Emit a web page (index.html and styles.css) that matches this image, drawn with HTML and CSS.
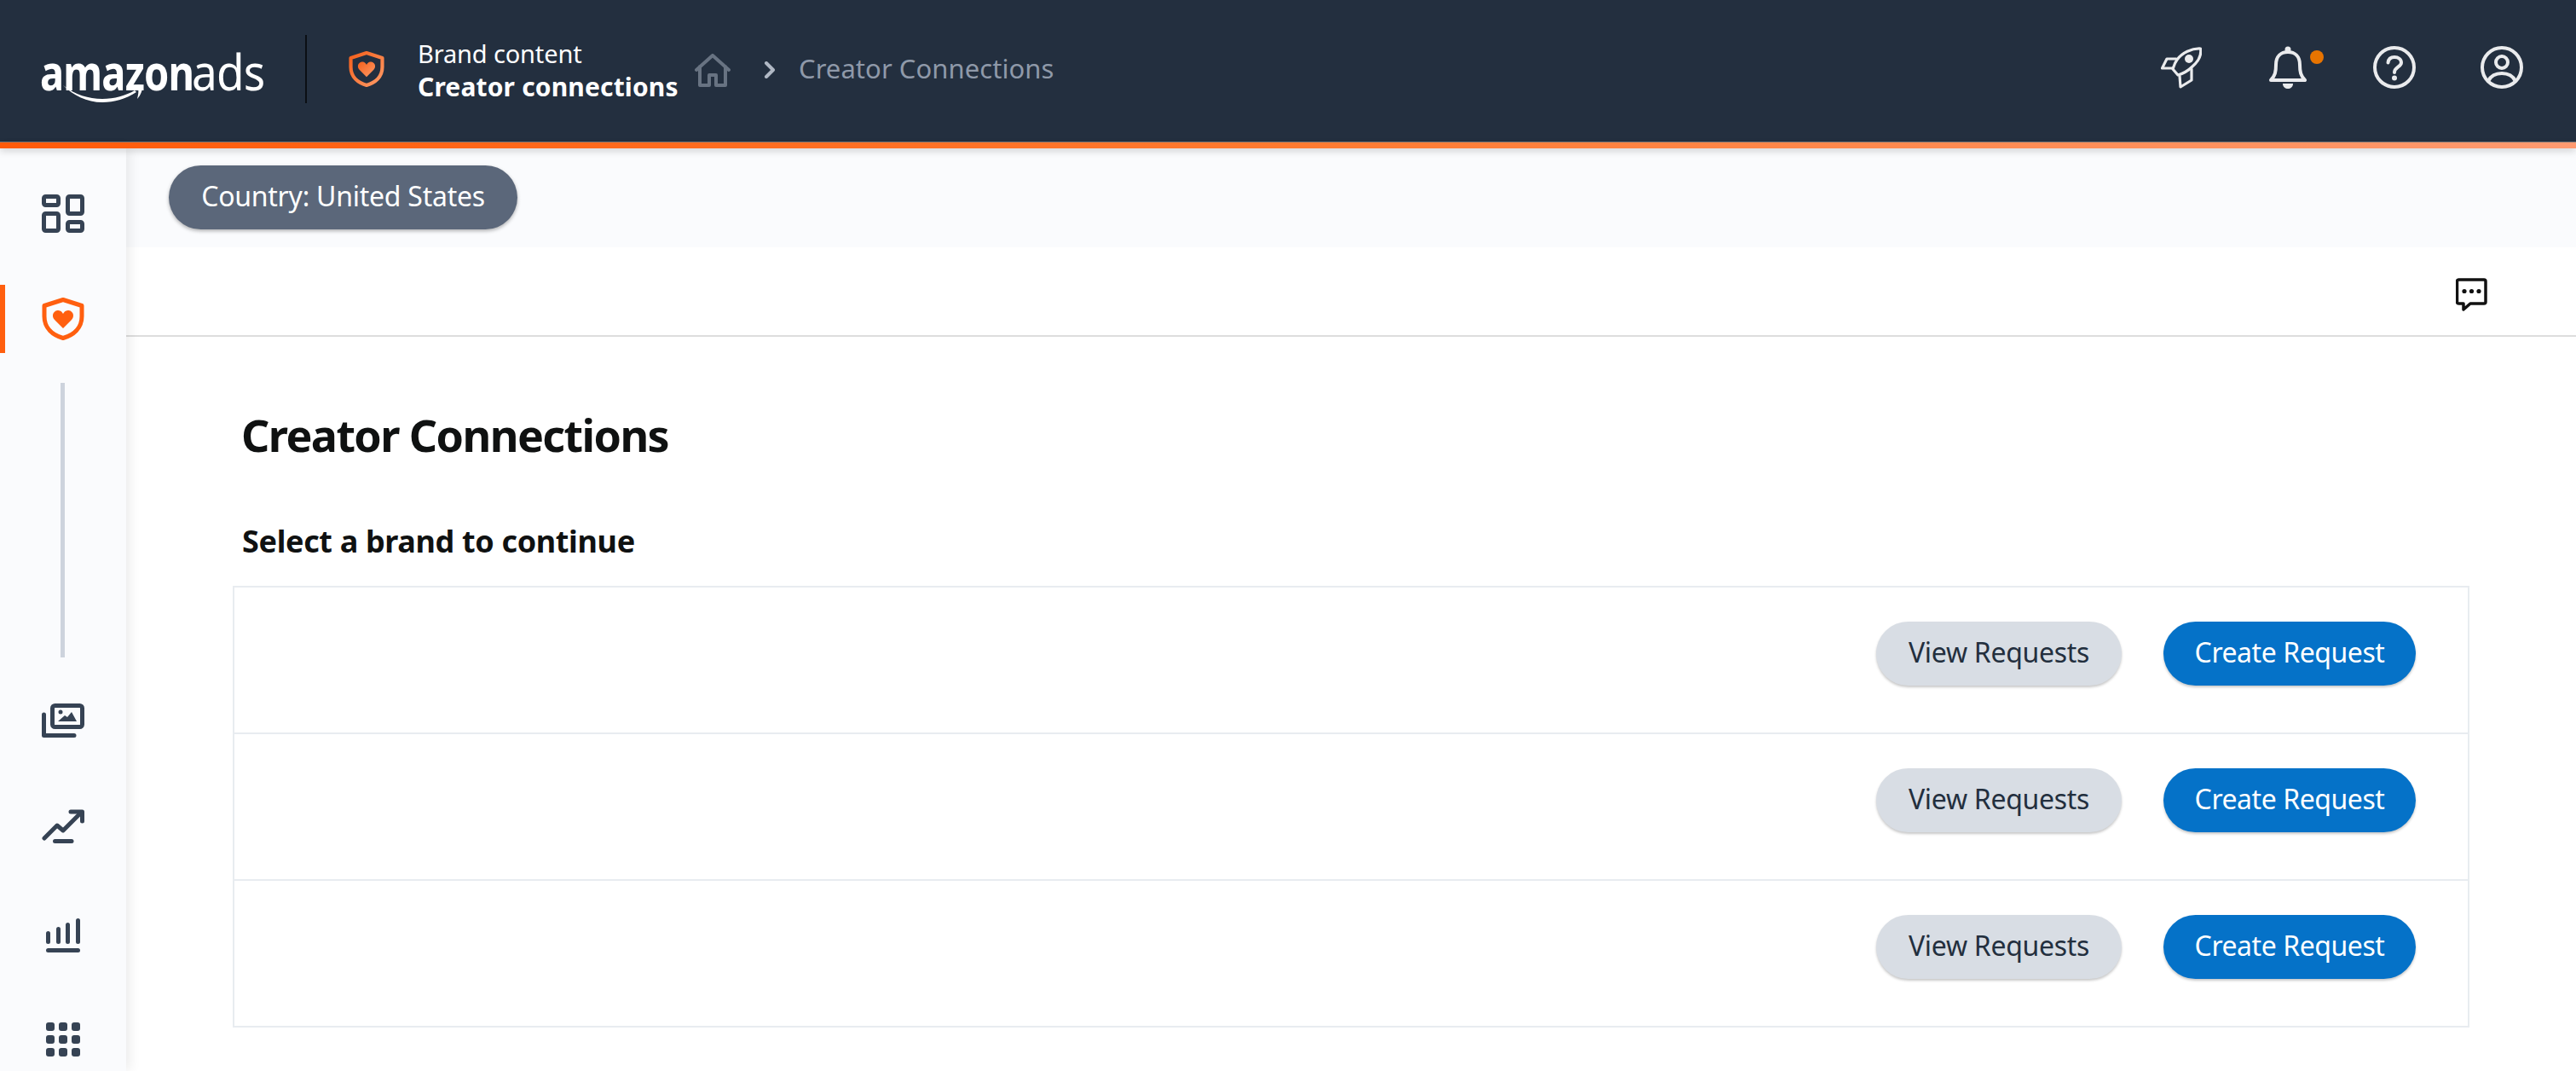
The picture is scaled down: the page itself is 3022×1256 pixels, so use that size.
FILE: index.html
```html
<!DOCTYPE html>
<html lang="en">
<head>
<meta charset="utf-8">
<title>Creator Connections</title>
<link rel="stylesheet" href="styles.css">
</head>
<body>
<header class="topbar">
  <div class="logo">
    <span class="logo-amazon">amazon</span><span class="logo-ads">ads</span>
    <svg class="logo-smile" width="94" height="21" viewBox="0 0 94 21"><path d="M0 1 C14 12 30 17 46 17 C60 17 74 13 84 7 L86 9 C74 17 60 21 46 21 C28 21 12 13 0 1 Z" fill="#fff"/><path d="M77 3 C82 0 90 0 93 1 C94 5 91 13 87 17 C88 12 89 8 88 6 C86 4 81 4 77 3 Z" fill="#fff"/></svg>
  </div>
  <span class="logo-divider"></span>
  <svg class="app-icon" width="42" height="42" viewBox="0 0 50 50"><defs><linearGradient id="sg" x1="0" y1="0" x2="1" y2="1"><stop offset="0" stop-color="#f4601c"/><stop offset="1" stop-color="#ff9a66"/></linearGradient></defs><path d="M25 2.5 L47 9.5 V22 C47 36 37 44 25 47.5 C13 44 3 36 3 22 V9.5 Z" fill="none" stroke="url(#sg)" stroke-width="5" stroke-linejoin="round"/><path d="M25 36 L15 26 C11.500 22.500 12.500 16 18.500 15 C22 14.500 24 17 25 19 C26 17 28 14.500 31.500 15 C37.500 16 38.500 22.500 35 26 Z" fill="url(#sg)"/></svg>
  <div class="app-title">
    <span class="app-section">Brand content</span>
    <span class="app-name">Creator connections</span>
  </div>
  <nav class="crumbs">
    <svg width="42" height="39" viewBox="0 0 42 39"><path d="M2 19 L21 2 L40 19 M6 15 V37 H17 V25 H25 V37 H36 V15" fill="none" stroke="#687382" stroke-width="4" stroke-linejoin="round" stroke-linecap="round"/></svg>
    <svg class="crumb-chevron" width="14" height="20" viewBox="0 0 14 20"><path d="M3 2 L11 10 L3 18" fill="none" stroke="#b0b8c4" stroke-width="4" stroke-linecap="round" stroke-linejoin="round"/></svg>
    <span class="crumb-text">Creator Connections</span>
  </nav>
  <div class="top-actions">
    <svg class="ta-rocket" width="48" height="50" viewBox="0 0 48 50"><g fill="none" stroke="#eaebed" stroke-width="3.200" stroke-linejoin="round" stroke-linecap="round"><path d="M46.500 3 C36 2.500 25 8 19 16 C16 20 15 24 14 27 L20 34 C27 32 32 29 37 24 C44 18 48 11 46.500 3 Z"/><path d="M18 15 H7 L1.500 26 H14"/><path d="M22 35 L23 48 L36 40 V27"/></g><circle cx="33" cy="15" r="5" fill="#eaebed"/></svg>
    <span class="bell-wrap">
      <svg width="44" height="50" viewBox="0 0 44 50"><path d="M2 40 C7 35 8 30 8 22 C8 12 14 7 22 7 C30 7 36 12 36 22 C36 30 37 35 42 40 Z" fill="none" stroke="#eaebed" stroke-width="4" stroke-linejoin="round"/><circle cx="22" cy="4" r="3.500" fill="#eaebed"/><path d="M16 44 H28 C28 48 25 50 22 50 C19 50 16 48 16 44 Z" fill="#eaebed"/></svg>
      <span class="bell-dot"></span>
    </span>
    <svg class="ta-help" width="50" height="50" viewBox="0 0 50 50"><circle cx="25" cy="25" r="23" fill="none" stroke="#eaebed" stroke-width="4"/><path d="M17.500 19.500 C18 15 21 13 25 13 C29.500 13 33 15.500 33 19.500 C33 24.500 25 24.500 25 31" fill="none" stroke="#eaebed" stroke-width="4" stroke-linecap="round"/><circle cx="25" cy="37.500" r="3" fill="#eaebed"/></svg>
    <svg class="ta-user" width="50" height="50" viewBox="0 0 50 50"><circle cx="25" cy="25" r="23" fill="none" stroke="#eaebed" stroke-width="4"/><circle cx="25" cy="19" r="7" fill="none" stroke="#eaebed" stroke-width="4"/><path d="M9 41 C12 35 18 32 25 32 C32 32 38 35 41 41" fill="none" stroke="#eaebed" stroke-width="4"/></svg>
  </div>
</header>
<div class="accent"></div>
<div class="shell">
  <aside class="sidebar">
    <a class="nav-item nav-dash"><svg width="50" height="45" viewBox="0 0 50 45"><g fill="none" stroke="#364354" stroke-width="5"><rect x="2.500" y="2.500" width="17" height="10" rx="2"/><rect x="30.500" y="2.500" width="17" height="20" rx="2"/><rect x="2.500" y="22.500" width="17" height="20" rx="2"/><rect x="30.500" y="32.500" width="17" height="10" rx="2"/></g></svg></a>
    <a class="nav-item nav-active"><svg width="50" height="50" viewBox="0 0 50 50"><path d="M25 2.500 L47 9.500 V22 C47 36 37 44 25 47.500 C13 44 3 36 3 22 V9.500 Z" fill="none" stroke="#ff5f0f" stroke-width="5" stroke-linejoin="round"/><path d="M25 36 L15 26 C11.500 22.500 12.500 16 18.500 15 C22 14.500 24 17 25 19 C26 17 28 14.500 31.500 15 C37.500 16 38.500 22.500 35 26 Z" fill="#ff5f0f"/></svg></a>
    <span class="nav-rule"></span>
    <a class="nav-item nav-media"><svg width="50" height="40" viewBox="0 0 50 40"><g fill="none" stroke="#364354" stroke-width="5" stroke-linejoin="round" stroke-linecap="round"><rect x="12.500" y="2.500" width="35" height="25" rx="3"/><path d="M2.500 13 V37.500 H38"/></g><path d="M19 21 L27 14 L30 16 L35 10 L41 21 Z" fill="#364354"/><circle cx="22" cy="10" r="2.500" fill="#364354"/></svg></a>
    <a class="nav-item nav-trend"><svg width="50" height="40" viewBox="0 0 50 40"><g fill="none" stroke="#364354" stroke-width="5" stroke-linecap="round" stroke-linejoin="round"><path d="M3 34 L18 19 L25 25 L46 4"/><path d="M34 3 H47.500 V14"/><path d="M15.500 37.500 H35"/></g></svg></a>
    <a class="nav-item nav-chart"><svg width="40" height="40" viewBox="0 0 40 40"><g fill="#364354"><rect x="0" y="15" width="5" height="15" rx="2.500"/><rect x="12" y="10" width="5" height="20" rx="2.500"/><rect x="23" y="5" width="5" height="25" rx="2.500"/><rect x="35" y="0" width="5" height="30" rx="2.500"/><rect x="0" y="35" width="40" height="5" rx="2.500"/></g></svg></a>
    <a class="nav-item nav-grid"><svg width="40" height="40" viewBox="0 0 40 40"><g fill="#364354"><rect x="0" y="0" width="10" height="10" rx="3"/><rect x="15" y="0" width="10" height="10" rx="3"/><rect x="30" y="0" width="10" height="10" rx="3"/><rect x="0" y="15" width="10" height="10" rx="3"/><rect x="15" y="15" width="10" height="10" rx="3"/><rect x="30" y="15" width="10" height="10" rx="3"/><rect x="0" y="30" width="10" height="10" rx="3"/><rect x="15" y="30" width="10" height="10" rx="3"/><rect x="30" y="30" width="10" height="10" rx="3"/></g></svg></a>
  </aside>
  <main class="content">
    <div class="filterbar"><button class="pill">Country: United States</button></div>
    <div class="toolbar">
      <svg width="37" height="39" viewBox="0 0 37 39"><path d="M3.500 2 H33 A2 2 0 0 1 35 4 V28 A2 2 0 0 1 33 30 H17 L9 37 V30 H3.500 A2 2 0 0 1 1.500 28 V4 A2 2 0 0 1 3.500 2 Z" fill="none" stroke="#111" stroke-width="3.500" stroke-linejoin="round"/><circle cx="10" cy="15.500" r="2.600" fill="#111"/><circle cx="18.500" cy="15.500" r="2.600" fill="#111"/><circle cx="27" cy="15.500" r="2.600" fill="#111"/></svg>
    </div>
    <section class="page">
      <h1 class="page-title">Creator Connections</h1>
      <h2 class="page-sub">Select a brand to continue</h2>
      <div class="brand-list">
        <div class="brand-row"><button class="btn btn-secondary">View Requests</button><button class="btn btn-primary">Create Request</button></div>
        <div class="brand-row"><button class="btn btn-secondary">View Requests</button><button class="btn btn-primary">Create Request</button></div>
        <div class="brand-row"><button class="btn btn-secondary">View Requests</button><button class="btn btn-primary">Create Request</button></div>
      </div>
    </section>
  </main>
</div>
</body>
</html>
```
FILE: styles.css
```css
* { box-sizing: border-box; }
html, body { margin: 0; height: 100%; }
body {
  width: 3022px;
  height: 1256px;
  overflow: hidden;
  background: #fff;
  font-family: "Noto Sans", "Open Sans", sans-serif;
  color: #0f1111;
  display: flex;
  flex-direction: column;
}
.topbar {
  height: 167px;
  flex: none;
  background: #232f3f;
  border-bottom: 1px solid #77797c;
  display: flex;
  align-items: flex-start;
  position: relative;
}
.logo {
  position: relative;
  width: 260px;
  height: 66px;
  margin: 54px 0 0 47px;
  color: #fff;
  line-height: 58px;
  white-space: nowrap;
  display: flex;
  align-items: baseline;
}
.logo-amazon { display: block; width: 178px; flex: none; font-size: 58px; font-weight: 700; letter-spacing: -1px; transform: scaleX(.81); transform-origin: 0 50%; }
.logo-ads { display: block; flex: none; font-size: 59px; font-weight: 400; letter-spacing: -1px; transform: scaleX(.9); transform-origin: 0 50%; }
.logo-smile { position: absolute; left: 27px; top: 45px; }
.logo-divider { width: 2px; height: 80px; background: #0b0f14; margin: 41px 49px 0 51px; flex: none; }
.app-icon { margin: 60px 39px 0 0; flex: none; }
.app-title { color: #fff; display: flex; flex-direction: column; margin-top: 44px; white-space: nowrap; width: 305px; }
.app-section { font-size: 29px; line-height: 38px; letter-spacing: -0.15px; }
.app-name { font-size: 30px; line-height: 40px; font-weight: 700; letter-spacing: 0.15px; }
.crumbs { display: flex; align-items: center; margin: 63px 0 0 20px; height: 39px; }
.crumb-chevron { margin: -1px 27px 0 39px; }
.crumb-text { font-size: 31px; color: #8f99a9; white-space: nowrap; margin-top: -6px; letter-spacing: 0.05px; }
.top-actions { margin-left: auto; margin-top: 54px; padding-right: 62px; display: flex; align-items: flex-start; }
.ta-rocket { margin-right: 79px; }
.bell-wrap { position: relative; display: block; height: 50px; margin-right: 78px; }
.bell-dot { position: absolute; left: 48px; top: 5px; width: 16px; height: 16px; border-radius: 50%; background: #e87400; }
.ta-help { margin-right: 76px; }
.accent {
  height: 7px;
  flex: none;
  background: linear-gradient(90deg, #ff5a0a 0%, #ff7a30 50%, #ff9a70 100%);
  box-shadow: 0 3px 8px rgba(0,0,0,.18);
  position: relative;
  z-index: 3;
}
.shell { flex: 1; display: flex; min-height: 0; }
.sidebar {
  width: 148px;
  flex: none;
  background: #fafbfd;
  box-shadow: 3px 0 14px rgba(0,0,0,.09);
  position: relative;
  z-index: 2;
  display: flex;
  flex-direction: column;
  align-items: stretch;
  padding-top: 36px;
}
.nav-item { height: 80px; display: flex; align-items: center; justify-content: center; flex: none; }
.nav-active { margin-top: 44px; border-left: 6px solid #ff5f0f; padding-right: 6px; }
.nav-rule { width: 5px; height: 322px; background: #cdd3dd; margin: 35px 0 34px 71px; flex: none; }
.nav-trend { margin-top: 44px; }
.nav-chart { margin-top: 48px; }
.nav-grid { margin-top: 42px; }
.content { flex: 1; min-width: 0; display: flex; flex-direction: column; }
.filterbar { height: 116px; background: #fafbfd; padding: 20px 0 0 50px; flex: none; }
.pill {
  height: 75px;
  width: 409px;
  border: 0;
  border-radius: 38px;
  background: #5b677a;
  color: #fff;
  font: 400 32px "Noto Sans", sans-serif;
  letter-spacing: -0.25px;
  box-shadow: 0 2px 4px rgba(0,0,0,.3);
  padding: 0 0 4px;
}
.toolbar {
  height: 105px;
  border-bottom: 2px solid #dddddd;
  display: flex;
  justify-content: flex-end;
  padding: 36px 104px 0 0;
  flex: none;
}
.page { padding: 0 125px 0 125px; }
.page-title { margin: 79px 0 0 10px; font-size: 52px; line-height: 72px; font-weight: 700; letter-spacing: -1.6px; }
.page-sub { margin: 65px 0 0 11px; font-size: 36px; line-height: 48px; font-weight: 700; letter-spacing: -0.35px; }
.brand-list { margin-top: 28px; width: 2624px; border: 2px solid #e8ecf0; }
.brand-row {
  height: 172px;
  display: flex;
  justify-content: flex-end;
  align-items: flex-start;
  gap: 49px;
  padding: 40px 61px 0 0;
  border-bottom: 2px solid #e8ecf0;
}
.brand-row:last-child { height: 170px; border-bottom: 0; }
.btn {
  height: 75px;
  border: 0;
  border-radius: 38px;
  font: 400 32px "Noto Sans", sans-serif;
  padding: 0 0 4px;
  box-shadow: 0 2px 3px rgba(0,0,0,.22);
}
.btn-secondary { width: 288px; background: #d8dde4; color: #232f3e; letter-spacing: -0.3px; }
.btn-primary { width: 296px; background: #0572c8; color: #fff; letter-spacing: -0.45px; }
```
